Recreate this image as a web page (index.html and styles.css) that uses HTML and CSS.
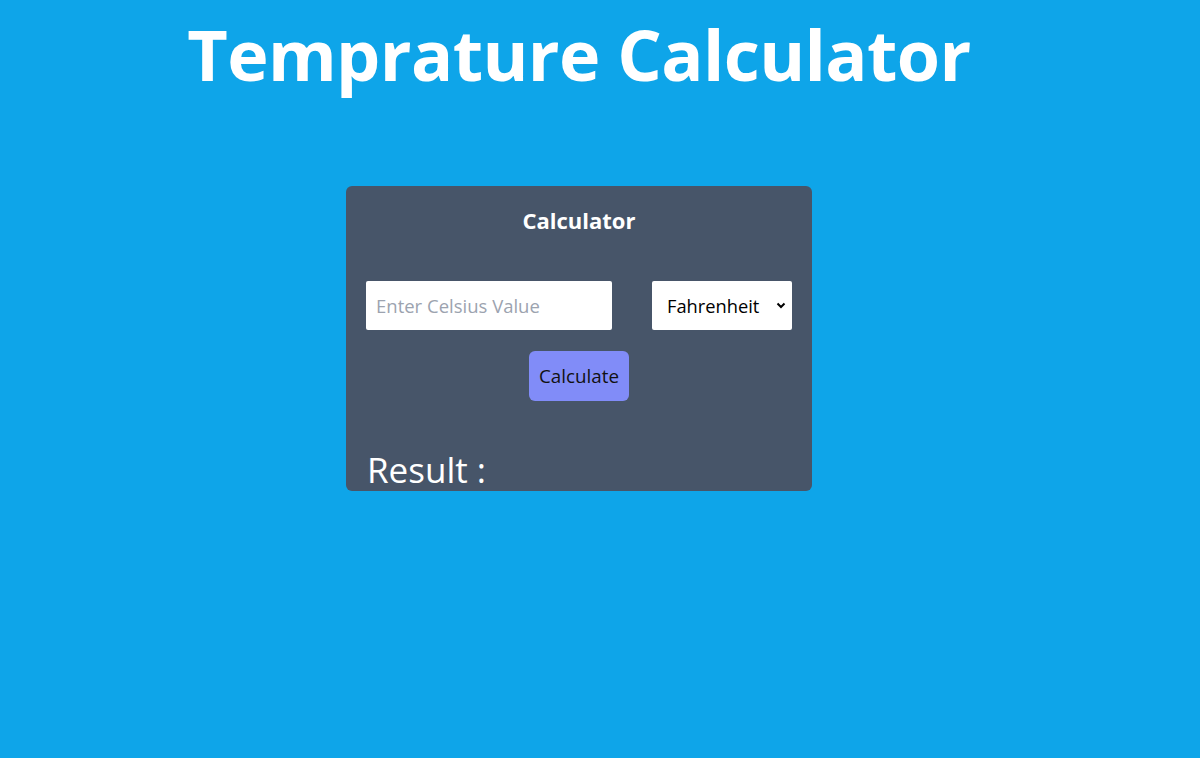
FILE: index.html
```html
<!DOCTYPE html>
<html>
<head>
<meta charset="utf-8">
<link rel="stylesheet" href="styles.css">
</head>
<body>
<div class="page">
  <h1 class="title">Temprature Calculator</h1>
  <div class="card">
    <h2 class="card-title">Calculator</h2>
    <div class="row">
      <input class="field" type="text" placeholder="Enter Celsius Value">
      <div class="select">
        <span>Fahrenheit</span>
        <svg width="10" height="7" viewBox="0 0 10 7"><path d="M1.5 1.5 L5 5 L8.5 1.5" fill="none" stroke="#000" stroke-width="2"/></svg>
      </div>
    </div>
    <div class="btn-row"><button class="btn">Calculate</button></div>
    <div class="result">Result :</div>
  </div>
</div>
</body>
</html>
```
FILE: styles.css
```css
html, body { margin: 0; padding: 0; }
body {
  background: #0ea5e9;
  font-family: "Open Sans", "Noto Sans", sans-serif;
  height: 758px;
  overflow: hidden;
}
.page {
  width: 1158px;
  display: flex;
  flex-direction: column;
  align-items: center;
}
.title {
  margin: 14px 0 0;
  font-size: 70px;
  line-height: 80px;
  font-weight: 700;
  color: #fff;
  letter-spacing: -0.6px;
}
.card {
  margin-top: 92px;
  width: 466px;
  height: 305px;
  box-sizing: border-box;
  background: #475569;
  border-radius: 6px;
  padding: 20px 20px 0;
  display: flex;
  flex-direction: column;
}
.card-title {
  margin: 0;
  text-align: center;
  color: #fff;
  font-size: 22px;
  font-weight: 700;
  line-height: 28px;
}
.row {
  margin-top: 47px;
  display: flex;
  justify-content: space-between;
  align-items: center;
}
.field {
  width: 246px;
  height: 49px;
  box-sizing: border-box;
  border: none;
  border-radius: 2px;
  padding: 0 10px;
  font-family: inherit;
  font-size: 18.5px;
  outline: none;
}
.field::placeholder { color: #9ca3af; }
.select {
  width: 140px;
  height: 49px;
  box-sizing: border-box;
  background: #fff;
  border-radius: 2px;
  display: flex;
  align-items: center;
  justify-content: space-between;
  padding: 0 6px 0 15px;
  font-size: 18.3px;
  color: #000;
}
.btn-row {
  margin-top: 21px;
  display: flex;
  justify-content: center;
}
.btn {
  width: 100px;
  height: 50px;
  border: none;
  border-radius: 6px;
  background: #818cf8;
  font-family: inherit;
  font-size: 18.8px;
  color: #111;
  padding: 0;
}
.result {
  margin-top: 51px;
  color: #fff;
  font-size: 35px;
  line-height: 36px;
  padding-left: 1px;
}
```
